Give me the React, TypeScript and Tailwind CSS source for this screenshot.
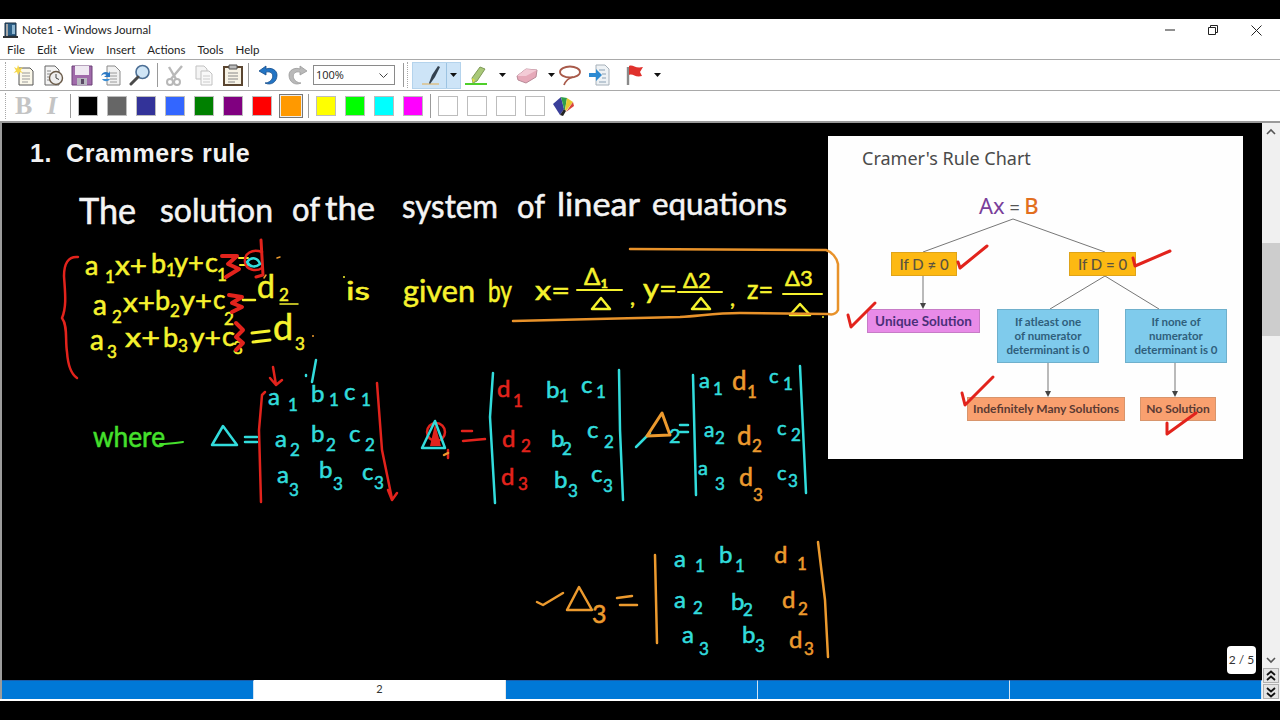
import React from "react";

const HAND = "font-['Lato',sans-serif]";
const W = "fill-[#f4f4f4]";
const Y = "fill-[#f6f22e]";
const R = "fill-[#e2231c]";
const C = "fill-[#32dcdc]";
const O = "fill-[#ec9a2e]";
const G = "fill-[#45e02c]";
const HEX: Record<string, string> = { [W]: "#f4f4f4", [Y]: "#f6f22e", [R]: "#e2231c", [C]: "#32dcdc", [O]: "#ec9a2e", [G]: "#45e02c" };

function T({ x, y, s = 24, c, w, children }: { x: number; y: number; s?: number; c: string; w?: number; children: React.ReactNode }) {
  return (
    <text x={x} y={y} fontSize={s} stroke={HEX[c]} strokeWidth={0.55} className={`${c} ${HAND}`} textLength={w} lengthAdjust={w ? "spacingAndGlyphs" : undefined}>
      {children}
    </text>
  );
}

function M({ x, y, l, c, sx, sy, sub, sc, s = 24 }: { x: number; y: number; l: string; c: string; sx: number; sy: number; sub: string; sc?: string; s?: number }) {
  return (
    <>
      <T x={x} y={y} c={c} s={s}>{l}</T>
      <T x={sx} y={sy} c={sc ?? c} s={17}>{sub}</T>
    </>
  );
}

function Ink({ d, c, w = 2.5 }: { d: string; c: string; w?: number }) {
  return <path d={d} fill="none" stroke={c} strokeWidth={w} strokeLinecap="round" strokeLinejoin="round" />;
}

const RED = "#e2231c";
const CY = "#32dcdc";
const OR = "#ec9a2e";
const YE = "#f6f22e";

function Notes() {
  return (
    <svg className="absolute inset-0 w-[1262px] h-[559px] pointer-events-none" viewBox="0 121 1262 559">
      {/* heading sentence */}
      <T x={79} y={224} s={37} c={W} w={57}>The</T>
      <T x={160} y={222} s={33} c={W} w={113}>solution</T>
      <T x={292} y={221} s={33} c={W} w={28}>of</T>
      <T x={325} y={220} s={33} c={W} w={50}>the</T>
      <T x={402} y={218} s={33} c={W} w={96}>system</T>
      <T x={517} y={218} s={33} c={W} w={28}>of</T>
      <T x={557} y={216} s={33} c={W} w={83}>linear</T>
      <T x={652} y={215} s={31} c={W} w={135}>equations</T>

      {/* system of equations */}
      <Ink d="M78 257C68 256 64 264 64 276C65 292 67 306 62 318C68 326 65 340 67 352C68 366 71 374 77 378" c={RED} />
      <M x={85} y={275} l="a" c={Y} s={27} sx={105} sy={283} sub="1" />
      <T x={115} y={275} s={27} c={Y} w={32}>x+</T>
      <M x={151} y={273} l="b" c={Y} s={27} sx={166} sy={276} sub="1" />
      <T x={174} y={272} s={27} c={Y} w={30}>y+</T>
      <M x={205} y={272} l="c" c={Y} s={27} sx={217} sy={281} sub="1" />
      <M x={93} y={315} l="a" c={Y} s={28} sx={112} sy={323} sub="2" />
      <T x={123} y={312} s={27} c={Y} w={32}>x+</T>
      <M x={155} y={310} l="b" c={Y} s={27} sx={170} sy={317} sub="2" />
      <T x={180} y={310} s={27} c={Y} w={32}>y+</T>
      <M x={213} y={309} l="c" c={Y} s={26} sx={224} sy={325} sub="2" />
      <M x={90} y={350} l="a" c={Y} s={28} sx={107} sy={358} sub="3" />
      <T x={125} y={347} s={27} c={Y} w={35}>x+</T>
      <M x={163} y={347} l="b" c={Y} s={27} sx={178} sy={352} sub="3" />
      <T x={190} y={347} s={27} c={Y} w={31}>y+</T>
      <M x={222} y={346} l="c" c={Y} s={27} sx={233} sy={354} sub="3" />

      {/* struck-out terms */}
      <Ink d="M222 256H237L228 264L239 269L226 277" c={RED} w={4} />
      <Ink d="M239 258H248M240 265H248" c={YE} w={2} />
      <Ink d="M261 240L263 275L256 277" c={RED} w={3} />
      <Ink d="M262 252C252 248 244 254 245 262C246 270 256 272 262 268" c={RED} />
      <Ink d="M247 262C252 256 258 258 260 264C255 268 250 267 247 262Z" c={CY} w={2.5} />
      <Ink d="M266 275L264 278M277 258L280 257" c={OR} w={1.5} />
      <Ink d="M229 295L242 297L232 303L242 307L232 312" c={RED} w={4} />
      <Ink d="M243 300H255" c={YE} />
      <M x={257} y={298} l="d" c={Y} s={32} sx={279} sy={301} sub="2" />
      <Ink d="M280 304H298" c={YE} w={1.5} />
      <Ink d="M236 323L243 330L236 337L243 343L236 350" c={RED} w={4} />
      <Ink d="M252 333L269 331M253 342L270 340" c={YE} w={3} />
      <M x={273} y={340} l="d" c={Y} s={36} sx={295} sy={350} sub="3" />
      <circle cx={313} cy={336} r={1} fill={OR} />

      {/* is given by */}
      <T x={346} y={300} s={25} c={Y} w={24}>is</T>
      <circle cx={344} cy={277} r={1} fill={YE} />
      <T x={403} y={302} s={30} c={Y} w={72}>given</T>
      <T x={488} y={302} s={30} c={Y} w={24}>by</T>
      <T x={535} y={300} s={26} c={Y} w={35}>x=</T>
      <T x={584} y={285} s={24} c={Y}>Δ₁</T>
      <Ink d="M577 290H622" c={YE} w={2} />
      <Ink d="M592 309L601 298L610 309Z" c={YE} />
      <T x={630} y={305} s={22} c={Y}>,</T>
      <T x={643} y={298} s={26} c={Y} w={34}>y=</T>
      <T x={683} y={288} s={22} c={Y}>Δ2</T>
      <Ink d="M678 292H722" c={YE} w={2} />
      <Ink d="M692 309L701 298L710 309Z" c={YE} />
      <T x={730} y={306} s={22} c={Y}>,</T>
      <T x={747} y={299} s={26} c={Y} w={26}>z=</T>
      <T x={785} y={286} s={22} c={Y}>Δ3</T>
      <Ink d="M783 294H822" c={YE} w={2} />
      <Ink d="M790 315L800 304L810 315Z" c={YE} />

      {/* where + delta */}
      <T x={93} y={447} s={29} c={G} w={72}>where</T>
      <Ink d="M160 444C170 444 176 443 183 442" c="#45e02c" w={2} />
      <Ink d="M212 445L223 426L237 445Z" c={CY} />
      <Ink d="M245 437H257M245 442H257" c={CY} />
      <Ink d="M265 392L262 395L259 430L261 502" c={RED} />
      <Ink d="M377 383L382 450L392 499M388 490L392 500L397 493" c={RED} />
      <Ink d="M273 367L276 385M270 378L276 385L282 380" c={RED} />
      <Ink d="M316 360L312 382M306 375V376" c={CY} />
      <M x={268} y={405} l="a" c={C} sx={288} sy={411} sub="1" />
      <M x={311} y={402} l="b" c={C} sx={329} sy={406} sub="1" />
      <M x={344} y={400} l="c" c={C} sx={361} sy={406} sub="1" />
      <M x={275} y={447} l="a" c={C} sx={290} sy={456} sub="2" />
      <M x={311} y={442} l="b" c={C} sx={326} sy={451} sub="2" />
      <M x={349} y={442} l="c" c={C} sx={365} sy={451} sub="2" />
      <M x={277} y={483} l="a" c={C} sx={289} sy={496} sub="3" />
      <M x={319} y={478} l="b" c={C} sx={333} sy={490} sub="3" />
      <M x={362} y={480} l="c" c={C} sx={374} sy={489} sub="3" />

      {/* delta 1 */}
      <circle cx={436} cy={432} r={9} fill="none" stroke={RED} strokeWidth={2.5} />
      <path d="M430 446L435 424L441 446Z" fill={RED} />
      <Ink d="M422 448L435 421L445 448Z" c={CY} />
      <Ink d="M448 450V458" c={RED} />
      <Ink d="M444 455L448 453" c={OR} />
      <Ink d="M462 431H472M463 441L485 439" c={RED} />
      <Ink d="M493 373L490 417L495 503" c={CY} />
      <Ink d="M619 370L620 430L623 500" c={CY} />
      <M x={497} y={397} l="d" c={R} sx={513} sy={407} sub="1" />
      <M x={546} y={398} l="b" c={C} sx={559} sy={402} sub="1" />
      <M x={581} y={393} l="c" c={C} sx={596} sy={398} sub="1" />
      <M x={502} y={447} l="d" c={R} sx={521} sy={452} sub="2" />
      <M x={551} y={447} l="b" c={C} sx={562} sy={455} sub="2" />
      <M x={587} y={438} l="c" c={C} sx={604} sy={448} sub="2" />
      <M x={501} y={485} l="d" c={R} sx={518} sy={490} sub="3" />
      <M x={554} y={488} l="b" c={C} sx={568} sy={497} sub="3" />
      <M x={591} y={482} l="c" c={C} sx={603} sy={492} sub="3" />

      {/* delta 2 */}
      <Ink d="M636 447L650 433" c={CY} />
      <Ink d="M647 436L662 413L670 435Z" c={OR} w={3} />
      <T x={669} y={443} s={20} c={C}>2</T>
      <Ink d="M680 425H688M680 432H688" c={CY} />
      <Ink d="M693 375L696 495" c={CY} />
      <Ink d="M800 366L806 493" c={CY} />
      <M x={699} y={388} l="a" c={C} s={22} sx={713} sy={395} sub="1" />
      <M x={732} y={390} l="d" c={O} s={26} sx={747} sy={398} sub="1" />
      <M x={769} y={383} l="c" c={C} s={20} sx={783} sy={390} sub="1" />
      <M x={704} y={437} l="a" c={C} s={21} sx={715} sy={444} sub="2" />
      <M x={737} y={445} l="d" c={O} s={26} sx={752} sy={452} sub="2" />
      <M x={777} y={435} l="c" c={C} s={20} sx={791} sy={441} sub="2" />
      <M x={698} y={475} l="a" c={C} s={20} sx={715} sy={490} sub="3" />
      <M x={739} y={486} l="d" c={O} s={25} sx={753} sy={501} sub="3" />
      <M x={777} y={480} l="c" c={C} s={20} sx={788} sy={487} sub="3" />

      {/* delta 3 */}
      <Ink d="M537 602L543 605L563 593" c={OR} />
      <Ink d="M567 610L579 587L592 610Z" c={OR} />
      <T x={592} y={623} s={25} c={O}>3</T>
      <Ink d="M617 598L632 596M620 605H637" c={OR} />
      <Ink d="M655 555L657 643" c={OR} />
      <Ink d="M818 542L825 600L828 657" c={OR} />
      <M x={674} y={567} l="a" c={C} sx={695} sy={572} sub="1" />
      <M x={719} y={563} l="b" c={C} sx={735} sy={572} sub="1" />
      <M x={774} y={563} l="d" c={O} sx={797} sy={570} sub="1" />
      <M x={674} y={608} l="a" c={C} sx={693} sy={614} sub="2" />
      <M x={731} y={610} l="b" c={C} sx={743} sy={616} sub="2" />
      <M x={782} y={608} l="d" c={O} sx={798} sy={615} sub="2" />
      <M x={682} y={643} l="a" c={C} sx={699} sy={655} sub="3" />
      <M x={742} y={643} l="b" c={C} sx={755} sy={652} sub="3" />
      <M x={789} y={648} l="d" c={O} sx={804} sy={655} sub="3" />

      {/* orange frame */}
      <Ink d="M630 249L826 250C832 252 837 258 838 264L838 310C836 314 832 315 828 314L740 313C715 313 700 316 680 317L513 321" c="#e8922a" />
      <circle cx={823} cy={317} r={1} fill={YE} />

      {/* red ticks */}
      <Ink d="M958 262L960 268L987 246" c={RED} w={3} />
      <Ink d="M1133 258L1135 266L1170 251" c={RED} w={3} />
      <Ink d="M848 315L851 327L875 303" c={RED} w={3} />
      <Ink d="M962 393L965 405L993 377" c={RED} w={3} />
      <Ink d="M1167 423L1167 434L1196 413" c={RED} w={3} />
    </svg>
  );
}

function Node({ cls, children }: { cls: string; children: React.ReactNode }) {
  return (
    <div className={`absolute flex items-center justify-center text-center font-['Lato',sans-serif] font-bold border ${cls}`}>
      {children}
    </div>
  );
}

function Chart() {
  return (
    <div className="absolute left-[826px] top-[13px] w-[415px] h-[323px] bg-[#fefefe] font-['Lato',sans-serif]">
      <div className="absolute left-[34px] top-[10px] text-[18px] leading-[24px] text-[#4a4a4a] font-['Noto_Sans',sans-serif]">Cramer's Rule Chart</div>
      <div className="absolute left-[151px] top-[53px] w-[66px] text-[22px] leading-[32px] font-['Noto_Sans',sans-serif] whitespace-nowrap">
        <span className="text-[#7a3f9a]">Ax</span>
        <span className="text-[#555] text-[18px]"> = </span>
        <span className="text-[#e26f1e] font-medium">B</span>
      </div>
      <svg className="absolute inset-0 w-[415px] h-[323px]" viewBox="828 136 415 323">
        <g stroke="#777" strokeWidth={1} fill="none">
          <path d="M1013 219L923 252M1013 219L1105 252M1105 276L1050 309M1105 276L1159 309" />
          <path d="M923 276V304M1048 363V392M1175 363V392" />
        </g>
        <g fill="#444">
          <path d="M920 303H926L923 309Z" />
          <path d="M1045 391H1051L1048 397Z" />
          <path d="M1172 391H1178L1175 397Z" />
        </g>
      </svg>
      <Node cls="left-[63px] top-[116px] w-[66px] h-[24px] bg-[#fdb913] border-[#dfa41a] text-[15px] text-[#5a5340] font-medium">If D ≠ 0</Node>
      <Node cls="left-[241px] top-[116px] w-[67px] h-[24px] bg-[#fdb913] border-[#dfa41a] text-[15px] text-[#5a5340] font-medium">If D = 0</Node>
      <Node cls="left-[39px] top-[173px] w-[113px] h-[24px] bg-[#e88be8] border-[#c77cc7] text-[13.5px] text-[#4a2f78]">Unique Solution</Node>
      <Node cls="left-[169px] top-[173px] w-[102px] h-[54px] bg-[#7fcbec] border-[#6fb0cc] text-[11.5px] leading-[14px] text-[#2f5f7c]">If atleast one<br />of numerator<br />determinant is 0</Node>
      <Node cls="left-[297px] top-[173px] w-[102px] h-[54px] bg-[#7fcbec] border-[#6fb0cc] text-[11.5px] leading-[14px] text-[#2f5f7c]">If none of<br />numerator<br />determinant is 0</Node>
      <Node cls="left-[139px] top-[261px] w-[158px] h-[24px] bg-[#f9a06f] border-[#d8956c] text-[12px] text-[#5a3a33]">Indefinitely Many Solutions</Node>
      <Node cls="left-[312px] top-[261px] w-[76px] h-[24px] bg-[#f9a06f] border-[#d8956c] text-[12px] text-[#5a3a33]">No Solution</Node>
    </div>
  );
}

const Sep = ({ cls = "" }: { cls?: string }) => <div className={`w-px h-[24px] bg-[#9a9a9a] shrink-0 ${cls}`} />;
const Grip = ({ cls = "" }: { cls?: string }) => <div className={`w-px h-[26px] border-l border-dotted border-[#a8a8a8] shrink-0 ${cls}`} />;
const Caret = ({ cls = "" }: { cls?: string }) => (
  <svg className={`w-[7px] h-[4px] shrink-0 ${cls}`} viewBox="0 0 7 4"><path d="M0 0H7L3.5 4Z" fill="#111" /></svg>
);
const I = ({ children, cls = "" }: { children: React.ReactNode; cls?: string }) => (
  <svg className={`w-[22px] h-[22px] shrink-0 ${cls}`} viewBox="0 0 22 22">{children}</svg>
);

function Toolbar1() {
  return (
    <div className="h-[30px] flex items-center bg-white border-t border-[#a9a9a9] pl-[5px] box-content">
      <Grip />
      <div className="flex items-center gap-[7px] ml-[7px]">
        <I>
          <path d="M6 4H17L20 7V21H6Z" fill="#fbf8ea" stroke="#555" />
          <path d="M9 9H17M9 12H17M9 15H17M9 18H15" stroke="#999" />
          <path d="M5 1L6.5 4.5L10 3L7.5 6.5L10 9L6.5 8L5 11L4 8L0.5 9L3 6.5L1 3L4 4.5Z" fill="#f6d84a" />
        </I>
        <I>
          <path d="M3 2H13L17 6V21H3Z" fill="#f4f4f4" stroke="#666" />
          <path d="M5 7H9M5 10H9M5 13H8M5 16H8" stroke="#888" />
          <circle cx="14" cy="14" r="6.5" fill="#eee" stroke="#6a5a48" strokeWidth="1.4" />
          <path d="M14 10V14L17 15.5" stroke="#444" fill="none" />
        </I>
        <I>
          <path d="M1 2H21V21H1Z" fill="#a06aaa" stroke="#6d4378" />
          <path d="M4 2H18V11H4Z" fill="#efe9f2" />
          <path d="M6 14H16V21H6Z" fill="#b8b8c0" />
          <path d="M10 15H13V20H10Z" fill="#5b4a66" />
        </I>
        <I>
          <path d="M7 2H15L20 7V21H7Z" fill="#f1f1f1" stroke="#8a8a8a" />
          <path d="M10 9H17M10 12H17M10 15H17M10 18H17" stroke="#9a9a9a" />
          <path d="M1 12C2 8 6 7 9 9L10 7V13H4L6.5 11C5 10 3 10 1 12Z" fill="#2c79c4" />
          <path d="M2 15C4 18 8 18 10 15H5Z" fill="#3c8ed4" />
        </I>
        <I>
          <circle cx="13.5" cy="8" r="6.5" fill="#cfe5f6" stroke="#4c6f95" strokeWidth="1.6" />
          <path d="M9 13L2 20" stroke="#4a4a4a" strokeWidth="3" strokeLinecap="round" />
        </I>
      </div>
      <Sep cls="ml-[6px]" />
      <div className="flex items-center gap-[7px] ml-[6px] opacity-60">
        <I>
          <circle cx="6" cy="18" r="3" fill="none" stroke="#888" strokeWidth="2" />
          <circle cx="13" cy="18" r="3" fill="none" stroke="#888" strokeWidth="2" />
          <path d="M7 15L18 2M12 15L5 3" stroke="#8a8a8a" strokeWidth="2.4" />
        </I>
        <I>
          <path d="M3 2H11L14 5V15H3Z" fill="#eee" stroke="#999" />
          <path d="M8 7H16L19 10V21H8Z" fill="#f6f6f6" stroke="#999" />
          <path d="M10 12H17M10 15H17M10 18H17" stroke="#aaa" />
        </I>
      </div>
      <I cls="ml-[7px]">
        <path d="M2 3H20V21H2Z" fill="#f7f3e6" stroke="#5a4530" strokeWidth="2" />
        <path d="M7 1H15V5H7Z" fill="#bbb" stroke="#555" />
        <path d="M6 9H16M6 12H16M6 15H16M6 18H13" stroke="#888" />
      </I>
      <Sep cls="ml-[4px]" />
      <I cls="ml-[8px]">
        <path d="M9 2L2 7L9 11V8C15 7 17 11 15 15C14 17 11 19 8 19C14 22 20 18 20 11C20 6 14 3 9 5Z" fill="#2274c4" stroke="#154d8a" strokeWidth="0.8" />
      </I>
      <I cls="ml-[8px]">
        <path d="M13 2L20 7L13 11V8C7 7 5 11 7 15C8 17 11 19 14 19C8 22 2 18 2 11C2 6 8 3 13 5Z" fill="#b9b9b9" stroke="#9b9b9b" strokeWidth="0.8" />
      </I>
      <div className="ml-[4px] w-[82px] h-[20px] border border-[#8a8a8a] bg-white flex items-center justify-between pl-[2px] pr-[6px] font-['Open_Sans',sans-serif] text-[11px] text-[#222]">
        <span>100%</span>
        <svg className="w-[9px] h-[5px]" viewBox="0 0 9 5"><path d="M0.5 0.5L4.5 4.5L8.5 0.5" fill="none" stroke="#444" /></svg>
      </div>
      <Sep cls="ml-[8px]" />
      <Grip cls="ml-[3px]" />
      <div className="ml-[4px] h-[27px] w-[49px] flex bg-[#cde4f7] border border-[#b4d3ec]">
        <div className="w-[34px] flex items-center justify-center border-r border-[#9cc3e2]">
          <I>
            <path d="M3 20H20" stroke="#d8c9a4" strokeWidth="2" />
            <path d="M10 19L13 11L19 2L21 3L16 13L11 20Z" fill="#33414f" />
          </I>
        </div>
        <div className="flex-1 flex items-center justify-center"><Caret /></div>
      </div>
      <I cls="ml-[1px] w-[28px]">
        <path d="M0 20H22" stroke="#4fcf2a" strokeWidth="2" />
        <path d="M8 19L7 14L15 3L20 5L12 17Z" fill="#a9c878" stroke="#7e9a57" />
        <path d="M8 19L7 14L10 16Z" fill="#e4e23a" />
      </I>
      <Caret cls="ml-[9px]" />
      <I cls="ml-[10px]">
        <path d="M1 12L10 5L21 6L20 13L10 19L2 16Z" fill="#e6a9b9" stroke="#b98a98" />
        <path d="M1 12L10 12L21 6L10 5Z" fill="#f3cbd6" />
      </I>
      <Caret cls="ml-[10px]" />
      <I cls="ml-[4px]">
        <ellipse cx="11" cy="8" rx="10" ry="5.5" fill="none" stroke="#a85a4a" strokeWidth="1.8" />
        <path d="M14 13C10 14 7 16 5 21" fill="none" stroke="#a85a4a" strokeWidth="1.8" />
      </I>
      <I cls="ml-[8px]">
        <path d="M7 1H16L20 5V21H7Z" fill="#eef2f5" stroke="#a6b0b9" />
        <path d="M10 6H16M13 10H17M13 14H17M10 18H17" stroke="#8aa0b4" />
        <path d="M0 9H7V5L13 11L7 17V13H0Z" fill="#2c8ad2" />
      </I>
      <I cls="ml-[12px]">
        <path d="M5 3V21" stroke="#8a8a8a" strokeWidth="2.4" />
        <path d="M6 2C10 0 12 5 20 3L17 8L19 12C12 14 10 9 6 11Z" fill="#e0312c" />
      </I>
      <Caret cls="ml-[9px]" />
    </div>
  );
}

const Swatch = ({ c }: { c: string }) => <div className={`w-[20px] h-[20px] shrink-0 border border-[#bdbdbd] ${c}`} />;

function Toolbar2() {
  return (
    <div className="h-[30px] flex items-center bg-white border-t border-[#a9a9a9] pl-[5px] box-content">
      <Grip />
      <span className="ml-[9px] w-[20px] font-['Liberation_Serif',serif] font-bold text-[26px] leading-none text-[#c4c4c4]">B</span>
      <span className="ml-[12px] w-[16px] font-['Liberation_Serif',serif] font-bold italic text-[26px] leading-none text-[#c4c4c4]">I</span>
      <Sep cls="ml-[7px]" />
      <div className="flex items-center gap-[9px] ml-[7px]">
        <Swatch c="bg-black" />
        <Swatch c="bg-[#666666]" />
        <Swatch c="bg-[#333399]" />
        <Swatch c="bg-[#3366ff]" />
        <Swatch c="bg-[#008000]" />
        <Swatch c="bg-[#800080]" />
        <Swatch c="bg-[#ff0000]" />
      </div>
      <div className="ml-[7px] w-[24px] h-[24px] border border-[#777] flex items-center justify-center bg-[#ececec]">
        <div className="w-[20px] h-[20px] bg-[#ff9900]" />
      </div>
      <Sep cls="ml-[5px]" />
      <div className="flex items-center gap-[9px] ml-[7px]">
        <Swatch c="bg-[#ffff00]" />
        <Swatch c="bg-[#00ff00]" />
        <Swatch c="bg-[#00ffff]" />
        <Swatch c="bg-[#ff00ff]" />
      </div>
      <Sep cls="ml-[7px]" />
      <div className="flex items-center gap-[9px] ml-[7px]">
        <Swatch c="bg-white" />
        <Swatch c="bg-white" />
        <Swatch c="bg-white" />
        <Swatch c="bg-white" />
      </div>
      <I cls="ml-[6px] w-[24px]">
        <path d="M1 9L9 2L12 14L8 20Z" fill="#3a3f9a" />
        <path d="M9 2L15 3L13 15L12 14Z" fill="#2f9f4a" />
        <path d="M15 3L21 7L14 16L13 15Z" fill="#e5c92f" />
        <path d="M21 7L22 11L14 17Z" fill="#d8433a" />
        <path d="M8 20L12 14L14 16L11 21Z" fill="#222" />
      </I>
    </div>
  );
}

const Tab = ({ active, label }: { active?: boolean; label?: string }) => (
  <div className={`flex-1 h-full flex items-center justify-center text-[11px] border-r ${active ? "bg-white text-[#333] border-[#e8e8e8]" : "bg-[#0078d7] border-t border-t-[#1a5ca8] border-r-[#cfe2f3]"}`}>
    {label}
  </div>
);

const Chev = ({ up, dbl }: { up?: boolean; dbl?: boolean }) => (
  <svg className="w-[12px] h-[12px]" viewBox="0 0 12 12">
    <path
      d={up ? (dbl ? "M2 5L6 1.5L10 5M2 10L6 6.5L10 10" : "M2 8L6 4L10 8") : dbl ? "M2 2L6 5.5L10 2M2 7L6 10.5L10 7" : "M2 4L6 8L10 4"}
      fill="none"
      stroke={dbl ? "#111" : "#555"}
      strokeWidth={dbl ? 1.8 : 1.6}
    />
  </svg>
);

export default function App() {
  return (
    <div className="relative w-[1280px] h-[720px] bg-black flex flex-col overflow-hidden font-['Lato',sans-serif]">
      <div className="h-[19px] shrink-0" />
      <div className="h-[21px] shrink-0 bg-white flex items-center pl-[3px] pr-[18px] pt-px text-[11.5px] text-[#222]">
        <svg className="w-[15px] h-[16px]" viewBox="0 0 15 16">
          <path d="M0 14H15V16H0Z" fill="#333" />
          <path d="M2 1H13V14H2Z" fill="#2d5f86" stroke="#1d2f40" />
          <path d="M9 3H12V12H9Z" fill="#8fb7d2" />
          <path d="M3 2H5V14H3Z" fill="#a6a6a6" />
        </svg>
        <span className="ml-[4px]">Note1 - Windows Journal</span>
        <div className="ml-auto flex items-center gap-[33px]">
          <svg className="w-[10px] h-[10px]" viewBox="0 0 10 10"><path d="M0 5H10" stroke="#222" /></svg>
          <svg className="w-[10px] h-[10px]" viewBox="0 0 10 10"><path d="M0.5 2.5H7.5V9.5H0.5ZM2.5 2.5V0.5H9.5V7.5H7.5" fill="none" stroke="#222" /></svg>
          <svg className="w-[11px] h-[11px]" viewBox="0 0 11 11"><path d="M0.5 0.5L10.5 10.5M10.5 0.5L0.5 10.5" stroke="#222" /></svg>
        </div>
      </div>
      <div className="h-[19px] shrink-0 bg-white flex items-center pl-[7px] pt-px gap-[12px] text-[11.5px] text-[#222]">
        <span>File</span>
        <span>Edit</span>
        <span>View</span>
        <span>Insert</span>
        <span>Actions</span>
        <span>Tools</span>
        <span>Help</span>
      </div>
      <Toolbar1 />
      <Toolbar2 />
      <div className="flex h-[578px] shrink-0 border-t-2 border-[#9a9a9a]">
        <div className="w-[1262px] flex flex-col border-l-2 border-[#9c9c9c]">
          <div className="relative h-[557px] bg-black overflow-hidden">
            <div className="absolute left-[28px] top-[15px] flex gap-[14px] font-['Liberation_Sans',sans-serif] font-bold text-[25px] tracking-[0.6px] leading-[30px] text-[#f2f2f2]">
              <span>1.</span>
              <span>Crammers rule</span>
            </div>
            <Chart />
            <div className="absolute left-[1225px] top-[523px] w-[29px] h-[28px] bg-white rounded-[4px] flex items-center justify-center text-[12px] text-[#333]">2 / 5</div>
          </div>
          <div className="h-[19px] flex">
            <Tab />
            <Tab active label="2" />
            <Tab />
            <Tab />
            <Tab />
          </div>
        </div>
        <div className="w-[18px] bg-[#f0f0f0] flex flex-col items-center">
          <div className="h-[18px] flex items-center justify-center"><Chev up /></div>
          <div className="mt-[102px] w-full h-[93px] bg-[#cdcdcd]" />
          <div className="mt-auto h-[16px] flex items-center justify-center"><Chev /></div>
          <div className="w-[16px] h-[15px] bg-[#e4e4e4] border border-[#b0b0b0] flex items-center justify-center"><Chev up dbl /></div>
          <div className="w-[16px] h-[15px] mt-px bg-[#e4e4e4] border border-[#b0b0b0] flex items-center justify-center"><Chev dbl /></div>
        </div>
      </div>
      <div className="h-[2px] shrink-0 bg-white" />
      <div className="absolute left-0 top-[121px] w-[1262px] h-[559px] pointer-events-none">
        <Notes />
      </div>
    </div>
  );
}
